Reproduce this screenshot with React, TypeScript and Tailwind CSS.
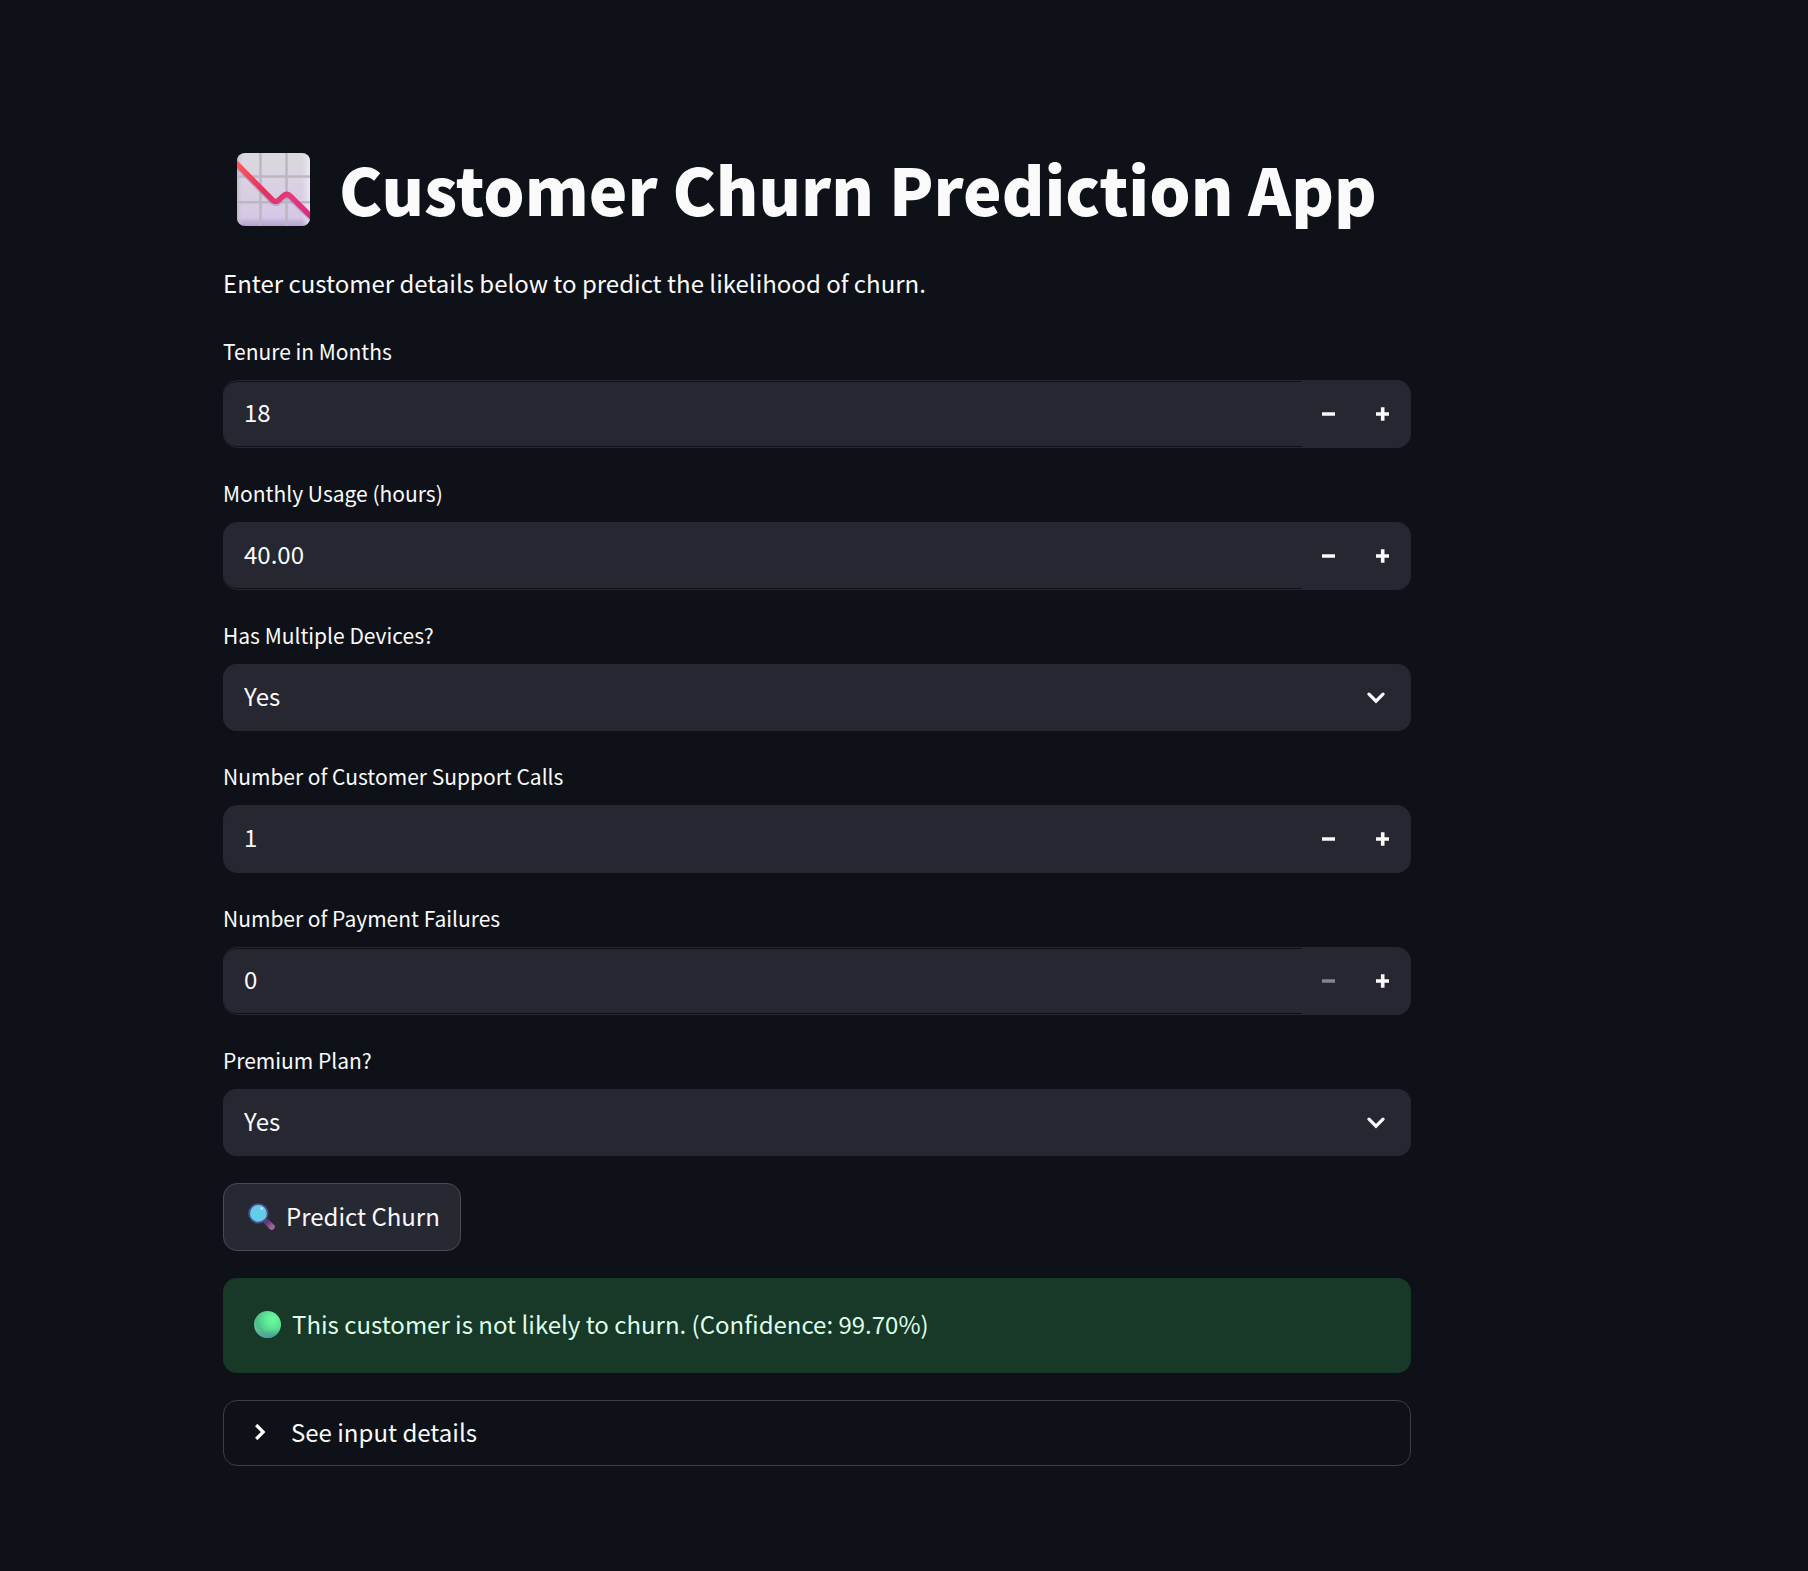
import { useId, useState } from "react";

function ChartIcon() {
  return (
    <svg viewBox="0 0 73 73" className="size-[73px] shrink-0" role="img" aria-label="Chart decreasing">
      <defs>
        <linearGradient id="paper" x1="0" y1="0" x2="0" y2="1">
          <stop offset="0" stopColor="#dad8dc" />
          <stop offset="0.35" stopColor="#d9d3e2" />
          <stop offset="0.88" stopColor="#d6c8e5" />
          <stop offset="1" stopColor="#b39fce" />
        </linearGradient>
        <linearGradient id="edge" x1="0" y1="0" x2="1" y2="0">
          <stop offset="0" stopColor="#b9b3c0" stopOpacity="0.8" />
          <stop offset="0.09" stopColor="#d9d3e2" stopOpacity="0" />
          <stop offset="0.88" stopColor="#e6dff0" stopOpacity="0" />
          <stop offset="1" stopColor="#f0ecf4" stopOpacity="0.9" />
        </linearGradient>
        <linearGradient id="trend" x1="0" y1="8" x2="73" y2="62" gradientUnits="userSpaceOnUse">
          <stop offset="0" stopColor="#ff5a5c" />
          <stop offset="0.45" stopColor="#e0305c" />
          <stop offset="0.7" stopColor="#e6397c" />
          <stop offset="1" stopColor="#e0267e" />
        </linearGradient>
        <clipPath id="sheet">
          <rect width="73" height="73" rx="8" />
        </clipPath>
      </defs>
      <g clipPath="url(#sheet)">
        <rect width="73" height="73" fill="url(#paper)" />
        <rect width="73" height="73" fill="url(#edge)" />
        <path d="M23.5 0V73M49.5 0V73M0 23.5H73M0 49.2H73" stroke="#bdb7c4" strokeWidth="2.6" />
        <path d="M-3 9.500L35.500 48.500Q38.700 51.500 41.800 48.500L46.200 44.500Q49.800 41.300 53.200 44.500L77 68" fill="none" stroke="#9d8db5" strokeOpacity="0.5" strokeWidth="6" />
        <path d="M-3 8L35.500 47Q38.700 50 41.800 47L46.200 43Q49.800 39.800 53.200 43L77 66.500" fill="none" stroke="url(#trend)" strokeWidth="5.400" strokeLinejoin="round" />
      </g>
    </svg>
  );
}

function MagnifierIcon() {
  return (
    <svg viewBox="0 0 27 27" className="size-[27px] shrink-0" aria-hidden="true">
      <defs>
        <linearGradient id="handle" x1="0" y1="0" x2="1" y2="1">
          <stop offset="0" stopColor="#5f3a70" />
          <stop offset="0.5" stopColor="#854a8c" />
          <stop offset="1" stopColor="#a0649c" />
        </linearGradient>
      </defs>
      <path d="M16.500 17.500L18.500 19.500" stroke="#5b4a78" strokeWidth="4" />
      <path d="M19.300 19.300L23.800 23.800" stroke="url(#handle)" strokeWidth="6" strokeLinecap="round" />
      <circle cx="10.400" cy="10.400" r="9.300" fill="#62cdeb" stroke="#504b8c" strokeWidth="1.800" />
      <circle cx="13.800" cy="5.600" r="1.400" fill="#c8e6fa" />
    </svg>
  );
}

function GreenBall() {
  return (
    <svg viewBox="0 0 27 27" className="size-[27px] shrink-0" aria-hidden="true">
      <defs>
        <radialGradient id="ball" cx="0.7" cy="0.32" r="0.75">
          <stop offset="0" stopColor="#6cfca0" />
          <stop offset="0.4" stopColor="#5de694" />
          <stop offset="0.8" stopColor="#4bbd88" />
          <stop offset="1" stopColor="#68c193" />
        </radialGradient>
        <linearGradient id="ballShade" x1="0" y1="0" x2="0" y2="1">
          <stop offset="0.7" stopColor="#5095a8" stopOpacity="0" />
          <stop offset="1" stopColor="#5095a8" stopOpacity="0.9" />
        </linearGradient>
      </defs>
      <circle cx="13.500" cy="13.500" r="13.500" fill="url(#ball)" />
      <circle cx="13.500" cy="13.500" r="13.500" fill="url(#ballShade)" />
    </svg>
  );
}

function ChevronDown() {
  return (
    <svg viewBox="0 0 18 12" className="pointer-events-none col-start-1 row-start-1 mr-[26px] h-3 w-[18px] self-center justify-self-end" aria-hidden="true">
      <path d="M2 2.200L9 9.200L16 2.200" fill="none" stroke="#fafafa" strokeWidth="3.200" strokeLinecap="round" />
    </svg>
  );
}

type NumberFieldProps = {
  label: string;
  initial: number;
  digits?: number;
  seams: string;
};

function NumberField({ label, initial, digits = 0, seams }: NumberFieldProps) {
  const id = useId();
  const [text, setText] = useState(initial.toFixed(digits));
  const value = Number(text) || 0;
  const step = (by: number) => setText(Math.max(0, value + by).toFixed(digits));
  const button =
    "flex w-[54px] items-center justify-center text-[#fafafa] disabled:text-[#808495]";

  return (
    <div>
      <label htmlFor={id} className="block h-[47px] pt-0.5 text-[21px] leading-8">
        {label}
      </label>
      <div className="flex h-[68px] overflow-hidden rounded-[14px] border border-[#262730] bg-[#262730]">
        <input
          id={id}
          type="text"
          inputMode="decimal"
          value={text}
          onChange={(e) => setText(e.target.value)}
          className={`min-w-0 flex-1 rounded-l-[13px] border-[#0e1117] bg-[#262730] px-5 pb-1 text-2xl outline-none ${seams}`}
        />
        <button type="button" aria-label={`Decrease ${label}`} disabled={value <= 0} onClick={() => step(-1)} className={button}>
          <svg viewBox="0 0 14 14" className="size-[14px]" aria-hidden="true">
            <path d="M0 7H13" stroke="currentColor" strokeWidth="3.600" />
          </svg>
        </button>
        <button type="button" aria-label={`Increase ${label}`} onClick={() => step(1)} className={button}>
          <svg viewBox="0 0 14 14" className="size-[14px]" aria-hidden="true">
            <path d="M0 7H13M6.700 0.200V13.800" stroke="currentColor" strokeWidth="3.600" />
          </svg>
        </button>
      </div>
    </div>
  );
}

function SelectField({ label }: { label: string }) {
  const id = useId();
  return (
    <div>
      <label htmlFor={id} className="block h-[47px] pt-0.5 text-[21px] leading-8">
        {label}
      </label>
      <div className="grid h-[67px] grid-cols-1 rounded-[14px] bg-[#262730]">
        <select id={id} defaultValue="Yes" className="col-start-1 row-start-1 appearance-none rounded-[14px] bg-[#262730] px-[21px] pb-1 text-2xl outline-none">
          <option>Yes</option>
          <option>No</option>
        </select>
        <ChevronDown />
      </div>
    </div>
  );
}

export default function App() {
  return (
    <main className="min-h-screen bg-[#0e1117] pt-[137px] pr-[397px] pb-[104px] pl-[223px] font-['Noto_Sans_CJK_SC','Noto_Sans',sans-serif] text-[#fafafa]">
      <h1 className="flex h-[104px] items-center gap-[29px] pl-[14px] text-[65px] leading-[100px] font-black whitespace-nowrap">
        <ChartIcon />
        <span className="pb-0.5">Customer Churn Prediction App</span>
      </h1>
      <p className="mt-5 text-2xl leading-[44px]">Enter customer details below to predict the likelihood of churn.</p>
      <form className="mt-[28px] flex flex-col gap-[27px]" onSubmit={(e) => e.preventDefault()}>
        <NumberField label="Tenure in Months" initial={18} seams="border-y" />
        <NumberField label="Monthly Usage (hours)" initial={40} digits={2} seams="border-b" />
        <SelectField label="Has Multiple Devices?" />
        <NumberField label="Number of Customer Support Calls" initial={1} seams="border-0" />
        <NumberField label="Number of Payment Failures" initial={0} seams="border-y" />
        <SelectField label="Premium Plan?" />
        <button type="submit" className="flex h-[68px] items-center gap-[11px] self-start rounded-[14px] border border-[#494b53] bg-[#262832] pr-5 pb-0.5 pl-6 text-2xl">
          <MagnifierIcon />
          Predict Churn
        </button>
        <div role="status" className="flex h-[95px] items-center gap-[11px] rounded-[14px] bg-[#183828] px-[31px] pb-[3px] text-2xl text-[#dffde9]">
          <GreenBall />
          This customer is not likely to churn. (Confidence: 99.70%)
        </div>
        <details className="group rounded-[14px] border border-[#3c3e42]">
          <summary className="flex h-[64px] cursor-pointer list-none items-center gap-[25px] pb-[3px] pl-[30px] text-2xl">
            <svg viewBox="0 0 12 18" className="h-[18px] w-3 group-open:rotate-90" aria-hidden="true">
              <path d="M2.200 2L9.200 9L2.200 16" fill="none" stroke="#fafafa" strokeWidth="3.200" />
            </svg>
            See input details
          </summary>
        </details>
      </form>
    </main>
  );
}
